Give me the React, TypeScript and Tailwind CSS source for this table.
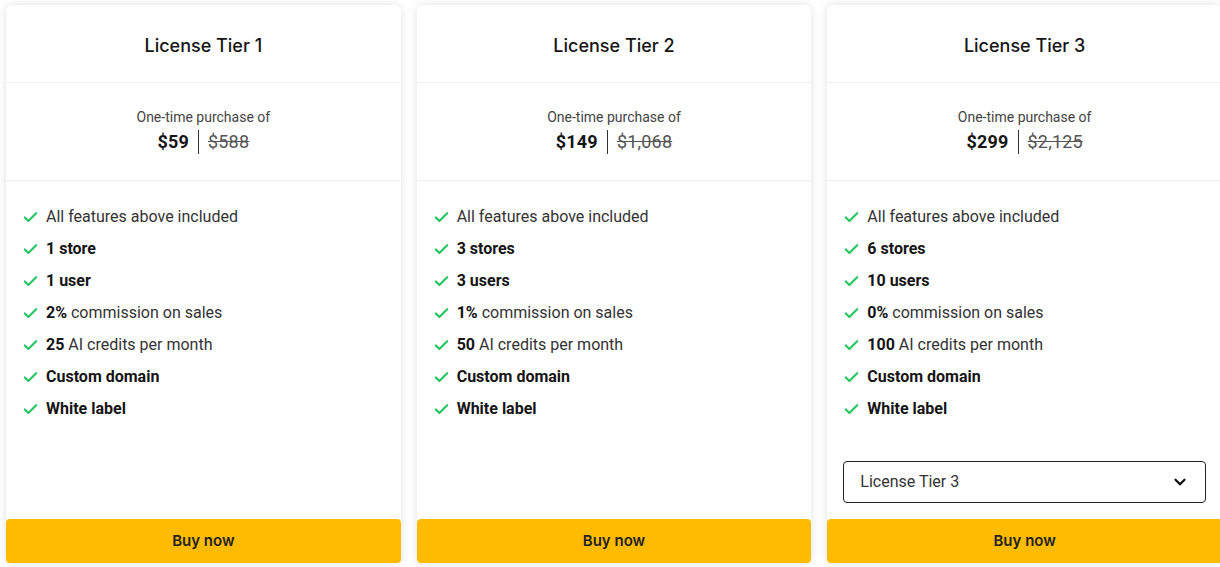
import { Check, ChevronDown } from "lucide-react";

type Feature = { bold?: string; text?: string };

type Tier = {
  name: string;
  price: string;
  was: string;
  features: Feature[];
  showSelect?: boolean;
};

const tiers: Tier[] = [
  {
    name: "License Tier 1",
    price: "$59",
    was: "$588",
    features: [
      { text: "All features above included" },
      { bold: "1 store" },
      { bold: "1 user" },
      { bold: "2%", text: " commission on sales" },
      { bold: "25", text: " AI credits per month" },
      { bold: "Custom domain" },
      { bold: "White label" },
    ],
  },
  {
    name: "License Tier 2",
    price: "$149",
    was: "$1,068",
    features: [
      { text: "All features above included" },
      { bold: "3 stores" },
      { bold: "3 users" },
      { bold: "1%", text: " commission on sales" },
      { bold: "50", text: " AI credits per month" },
      { bold: "Custom domain" },
      { bold: "White label" },
    ],
  },
  {
    name: "License Tier 3",
    price: "$299",
    was: "$2,125",
    showSelect: true,
    features: [
      { text: "All features above included" },
      { bold: "6 stores" },
      { bold: "10 users" },
      { bold: "0%", text: " commission on sales" },
      { bold: "100", text: " AI credits per month" },
      { bold: "Custom domain" },
      { bold: "White label" },
    ],
  },
];

function TierCard({ tier }: { tier: Tier }) {
  return (
    <div className="flex h-[558px] w-[394.67px] shrink-0 flex-col rounded-t-[6px] bg-white shadow-[0_0_8px_rgba(0,0,0,0.12)]">
      <div className="flex h-[78px] items-center justify-center border-b border-[#efefef] pt-[4px]">
        <h2 className="font-['Inter',sans-serif] text-[18px] font-medium text-[#151515]">
          {tier.name}
        </h2>
      </div>
      <div className="flex h-[98px] flex-col items-center border-b border-[#efefef] pt-[24px]">
        <span className="text-[14px] leading-[20px] text-[#444]">One-time purchase of</span>
        <div className="mt-[3px] flex items-center gap-[9px]">
          <span className="text-[18px] font-bold leading-[24px] tracking-[0.2px] text-[#151515]">{tier.price}</span>
          <span className="h-[24px] w-px bg-[#333]" />
          <span className="text-[18px] leading-[24px] tracking-[0.2px] text-[#555] line-through">{tier.was}</span>
        </div>
      </div>
      <ul className="flex flex-col pl-[16px] pt-[20px]">
        {tier.features.map((f, i) => (
          <li key={i} className="flex h-[32px] items-center gap-[7px] text-[16px] text-[#333]">
            <Check className="h-[17px] w-[17px] text-[#22c55e]" strokeWidth={3} />
            <span>
              {f.bold && <b className="font-bold text-[#151515]">{f.bold}</b>}
              {f.text}
            </span>
          </li>
        ))}
      </ul>
      <div className="flex-1" />
      {tier.showSelect && (
        <div className="mx-[16px] mb-[16px] flex h-[42px] items-center justify-between rounded-[4px] border border-[#222] px-[16px] text-[16px] text-[#333]">
          <span>{tier.name}</span>
          <ChevronDown className="h-[18px] w-[18px] text-[#111]" strokeWidth={3} />
        </div>
      )}
      <button
        type="button"
        className="h-[44px] w-full rounded-[4px] bg-[#ffbb00] pt-[1px] font-['Inter',sans-serif] text-[15px] font-semibold text-[#222]"
      >
        Buy now
      </button>
    </div>
  );
}

export default function App() {
  return (
    <div className="h-[567px] w-[1220px] overflow-hidden bg-white font-['Roboto',sans-serif]">
      <div className="flex gap-[16px] pl-[6px] pt-[5px]">
        {tiers.map((t) => (
          <TierCard key={t.name} tier={t} />
        ))}
      </div>
    </div>
  );
}
